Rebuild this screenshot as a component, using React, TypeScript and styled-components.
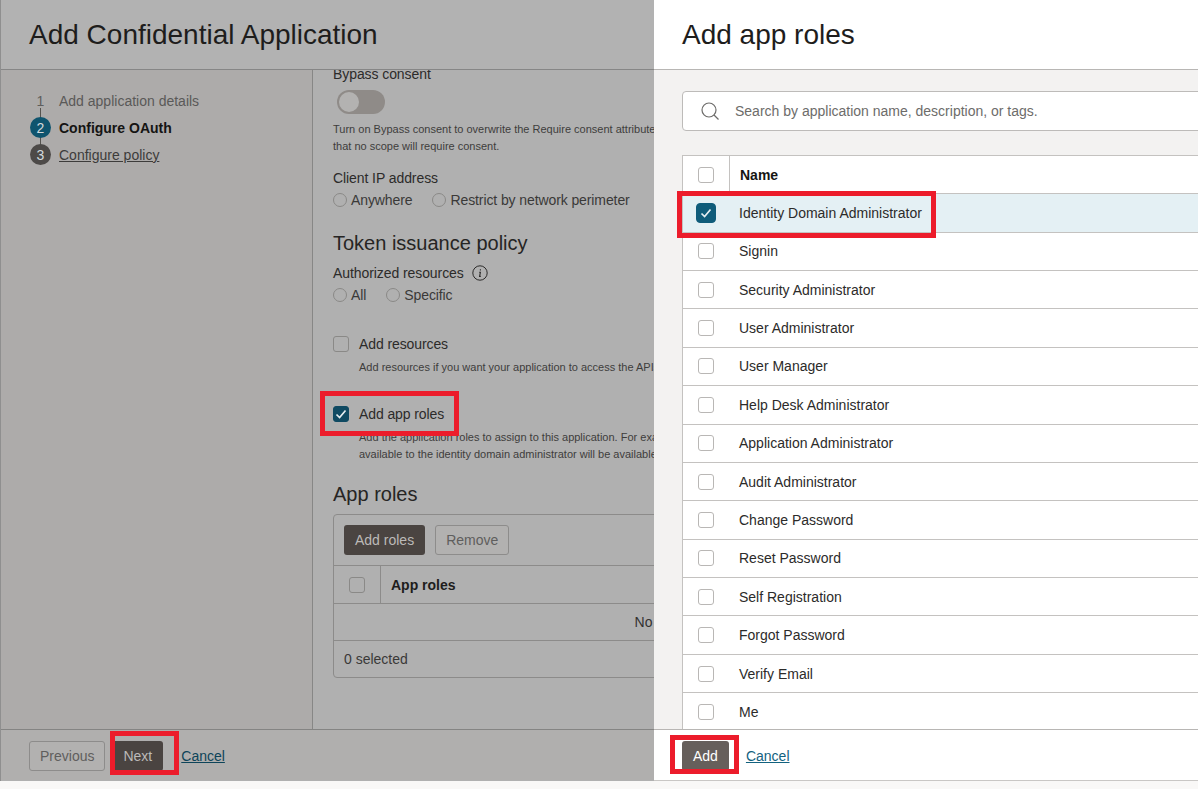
import React from 'react';
import styled, { createGlobalStyle } from 'styled-components';

const GlobalStyle = createGlobalStyle`
  html, body {
    margin: 0;
    padding: 0;
    height: 100%;
    overflow: hidden;
    background: #f9f8f7;
    font-family: "Liberation Sans", Arial, sans-serif;
  }
  * {
    box-sizing: border-box;
  }
`;

const Page = styled.div`
  display: flex;
  width: 1198px;
  height: 781px;
  overflow: hidden;
`;

const LeftPanel = styled.section`
  position: relative;
  display: flex;
  flex-direction: column;
  width: 654px;
  flex: none;
  background: #b1b1b1;
  border-left: 1px solid #8f8f8f;
  color: #1d1c1b;
`;

const RightPanel = styled.section`
  position: relative;
  display: flex;
  flex-direction: column;
  flex: 1;
  min-width: 0;
  background: #fff;
`;

const Header = styled.header<{ $dim?: boolean }>`
  flex: none;
  height: 70px;
  padding: 18px 0 0 28px;
  border-bottom: 1px solid ${(p) => (p.$dim ? '#868686' : '#b8b6b4')};
  background: ${(p) => (p.$dim ? '#b2b2b2' : '#fff')};
`;

const Title = styled.h1`
  margin: 0;
  font-size: 28px;
  line-height: 34px;
  font-weight: 400;
  color: #1e1d1c;
`;

const LeftBody = styled.div`
  flex: 1;
  min-height: 0;
  display: flex;
`;

const Sidebar = styled.nav`
  width: 312px;
  flex: none;
  padding: 17px 0 0 29px;
  background: #adabaa;
  border-right: 1px solid #878786;
`;

const Step = styled.div`
  position: relative;
  display: flex;
  align-items: center;
  gap: 8px;
  height: 27px;
  font-size: 14px;
`;

const StepBadge = styled.span<{ $kind: 'done' | 'current' | 'next' }>`
  position: relative;
  z-index: 1;
  display: flex;
  align-items: center;
  justify-content: center;
  width: 21px;
  height: 21px;
  flex: none;
  border-radius: 50%;
  font-size: 14px;
  color: ${(p) => (p.$kind === 'done' ? '#5f5e5d' : '#d3dadd')};
  background: ${(p) =>
    p.$kind === 'current' ? '#0f546e' : p.$kind === 'next' ? '#4d4a48' : 'transparent'};
`;

const StepLink = styled.span<{ $kind: 'done' | 'current' | 'next' }>`
  color: ${(p) => (p.$kind === 'current' ? '#151413' : p.$kind === 'next' ? '#3d3c3b' : '#5a5958')};
  font-weight: ${(p) => (p.$kind === 'current' ? 700 : 400)};
  text-decoration: ${(p) => (p.$kind === 'next' ? 'underline' : 'none')};
`;

const StepConnector = styled.span`
  position: absolute;
  left: 10px;
  top: -6px;
  width: 1px;
  height: 12px;
  background: #55534f;
`;

const Form = styled.div`
  flex: 1;
  min-width: 0;
  overflow: hidden;
  padding-left: 20px;
  background: #b0b0b0;
`;

const FieldLabel = styled.div<{ $top?: number }>`
  margin-top: ${(p) => p.$top ?? 0}px;
  font-size: 14px;
  line-height: 16px;
  letter-spacing: -0.08px;
  color: #2c2b2a;
  white-space: nowrap;
  display: flex;
  align-items: center;
  gap: 8px;
`;

const Toggle = styled.div`
  position: relative;
  width: 48px;
  height: 24px;
  margin: 8px 0 0 4px;
  border-radius: 12px;
  background: #8f8b88;
`;

const ToggleKnob = styled.span`
  position: absolute;
  left: 2px;
  top: 2px;
  width: 20px;
  height: 20px;
  border-radius: 50%;
  background: #b3b2b1;
`;

const HelpText = styled.p<{ $indent?: boolean; $top?: number }>`
  margin: ${(p) => p.$top ?? 0}px 0 0 ${(p) => (p.$indent ? 26 : 0)}px;
  font-size: 11px;
  line-height: 17px;
  color: #3e3d3c;
  white-space: nowrap;
`;

const RadioRow = styled.div`
  display: flex;
  gap: 20px;
  margin-top: 5px;
  font-size: 14px;
  line-height: 18px;
  letter-spacing: -0.1px;
  color: #3a3938;
`;

const RadioItem = styled.label`
  display: flex;
  align-items: center;
  gap: 4px;
`;

const Radio = styled.span`
  width: 14px;
  height: 14px;
  border: 1px solid #8a8987;
  border-radius: 50%;
`;

const SectionTitle = styled.h2<{ $top: number }>`
  margin: ${(p) => p.$top}px 0 0;
  font-size: 20px;
  line-height: 24px;
  font-weight: 400;
  color: #262524;
`;

const CheckField = styled.div<{ $top: number }>`
  display: flex;
  align-items: center;
  gap: 10px;
  margin-top: ${(p) => p.$top}px;
  font-size: 14px;
  line-height: 18px;
  letter-spacing: -0.1px;
  color: #2c2b2a;
`;

const Box = styled.span<{ $checked?: boolean; $dim?: boolean; $large?: boolean }>`
  display: flex;
  align-items: center;
  justify-content: center;
  width: ${(p) => (p.$large ? 20 : 16)}px;
  height: ${(p) => (p.$large ? 20 : 16)}px;
  flex: none;
  border-radius: ${(p) => (p.$large ? 4 : 3)}px;
  border: 1px solid ${(p) => (p.$checked ? (p.$dim ? '#0f4a62' : '#0f5c7a') : p.$dim ? '#8a8987' : '#b9b7b5')};
  background: ${(p) => (p.$checked ? (p.$dim ? '#0f4a62' : '#0f5c7a') : 'transparent')};
`;

const DimTable = styled.div`
  width: 718px;
  margin-top: 8px;
  border: 1px solid #8c8b8a;
  border-radius: 4px;
  font-size: 14px;
`;

const Toolbar = styled.div`
  display: flex;
  gap: 10px;
  height: 51px;
  padding: 10px 10px 0;
  border-bottom: 1px solid #8c8b8a;
`;

const SolidButton = styled.button<{ $light?: boolean }>`
  height: 30px;
  padding: 0 11px;
  border: none;
  border-radius: 3px;
  font-family: inherit;
  font-size: 14px;
  background: ${(p) => (p.$light ? '#665f5b' : '#4a4441')};
  color: ${(p) => (p.$light ? '#fff' : '#bcbab8')};
`;

const GhostButton = styled.button`
  height: 30px;
  padding: 0 10px;
  border: 1px solid #8d8c8b;
  border-radius: 3px;
  font-family: inherit;
  font-size: 14px;
  background: #b2b1b0;
  color: #5f5e5d;
`;

const DimHeadRow = styled.div`
  display: flex;
  align-items: center;
  height: 38px;
  border-bottom: 1px solid #8c8b8a;
`;

const CheckCell = styled.div<{ $divider?: boolean; $dim?: boolean }>`
  display: flex;
  align-items: center;
  justify-content: center;
  width: 47px;
  height: 100%;
  flex: none;
  border-right: 1px solid
    ${(p) => (p.$divider ? (p.$dim ? '#8c8b8a' : '#c4c2c0') : 'transparent')};
`;

const HeadLabel = styled.span<{ $dim?: boolean }>`
  padding-left: 10px;
  font-weight: 700;
  font-size: 14px;
  color: ${(p) => (p.$dim ? '#1e1d1c' : '#161513')};
`;

const EmptyRow = styled.div`
  height: 37px;
  line-height: 37px;
  text-align: center;
  border-bottom: 1px solid #8c8b8a;
  color: #333231;
`;

const TableFooter = styled.div`
  height: 36px;
  padding-left: 10px;
  line-height: 36px;
  color: #3a3938;
`;

const Footer = styled.footer<{ $dim?: boolean }>`
  flex: none;
  display: flex;
  align-items: center;
  height: 52px;
  padding: 1px 0 0 28px;
  gap: ${(p) => (p.$dim ? '7px' : '17px')};
  border-top: 1px solid ${(p) => (p.$dim ? '#848483' : '#b8b6b4')};
  border-bottom: 1px solid ${(p) => (p.$dim ? '#b0b0b0' : '#c9c7c5')};
  background: ${(p) => (p.$dim ? '#b0afae' : '#fff')};
`;

const CancelLink = styled.a<{ $dim?: boolean }>`
  font-size: 14px;
  text-decoration: underline;
  margin-left: ${(p) => (p.$dim ? '11px' : '0')};
  color: ${(p) => (p.$dim ? '#0d4459' : '#13627f')};
`;

const RightBody = styled.div`
  flex: 1;
  min-height: 0;
  overflow: hidden;
  padding: 21px 0 0 28px;
  background: #f3f2f1;
`;

const SearchBar = styled.div`
  display: flex;
  align-items: center;
  gap: 15px;
  width: 560px;
  height: 40px;
  padding-left: 17px;
  background: #fff;
  border: 1px solid #bdbbb9;
  border-radius: 4px;
  font-size: 14px;
  color: #6d6c6a;
`;

const RolesTable = styled.div`
  width: 560px;
  margin-top: 24px;
  background: #fff;
  border: 1px solid #c4c2c0;
  border-bottom: none;
`;

const HeadRow = styled.div`
  display: flex;
  align-items: center;
  height: 38.2px;
  border-bottom: 1px solid #c4c2c0;
`;

const RoleRow = styled.div<{ $selected?: boolean }>`
  display: flex;
  align-items: center;
  height: 38.4px;
  border-bottom: 1px solid #c4c2c0;
  background: ${(p) => (p.$selected ? '#e4f0f4' : '#fff')};
  font-size: 14px;
  color: #2c2b2a;
`;

const RoleName = styled.span`
  padding-left: 9px;
`;

const Highlight = styled.div<{ $l: number; $t: number; $w: number; $h: number }>`
  position: absolute;
  left: ${(p) => p.$l}px;
  top: ${(p) => p.$t}px;
  width: ${(p) => p.$w}px;
  height: ${(p) => p.$h}px;
  border: 5px solid #ec1c2b;
  pointer-events: none;
`;

const Tick = () => (
  <svg width="12" height="12" viewBox="0 0 12 12" fill="none">
    <path d="M1.5 6.5 L4.6 9.5 L10.5 2.5" stroke="#e6eef1" strokeWidth="1.7" />
  </svg>
);

const InfoIcon = () => (
  <svg width="16" height="16" viewBox="0 0 16 16" fill="none">
    <circle cx="8" cy="8" r="7.2" stroke="#2c2b2a" strokeWidth="1" />
    <path d="M8.4 4.2v1.2M7.2 7.2h1.2L7.6 11.4h1.2" stroke="#2c2b2a" strokeWidth="1.1" />
  </svg>
);

const SearchIcon = () => (
  <svg width="20" height="20" viewBox="0 0 20 20" fill="none">
    <circle cx="9" cy="9" r="7" stroke="#6d6c6a" strokeWidth="1.2" />
    <path d="M14 14l4.5 4.5" stroke="#6d6c6a" strokeWidth="1.2" />
  </svg>
);

const roles = [
  'Identity Domain Administrator',
  'Signin',
  'Security Administrator',
  'User Administrator',
  'User Manager',
  'Help Desk Administrator',
  'Application Administrator',
  'Audit Administrator',
  'Change Password',
  'Reset Password',
  'Self Registration',
  'Forgot Password',
  'Verify Email',
  'Me'
];

const App = () => {
  return (
    <>
      <GlobalStyle />
      <Page>
        <LeftPanel>
          <Header $dim>
            <Title>Add Confidential Application</Title>
          </Header>
          <LeftBody>
            <Sidebar>
              <Step>
                <StepBadge $kind="done">1</StepBadge>
                <StepLink $kind="done">Add application details</StepLink>
              </Step>
              <Step>
                <StepConnector />
                <StepBadge $kind="current">2</StepBadge>
                <StepLink $kind="current">Configure OAuth</StepLink>
              </Step>
              <Step>
                <StepConnector />
                <StepBadge $kind="next">3</StepBadge>
                <StepLink $kind="next">Configure policy</StepLink>
              </Step>
            </Sidebar>
            <Form>
              <FieldLabel $top={-4}>Bypass consent</FieldLabel>
              <Toggle>
                <ToggleKnob />
              </Toggle>
              <HelpText $top={7}>
                Turn on Bypass consent to overwrite the Require consent attribute for all scopes so
                <br />
                that no scope will require consent.
              </HelpText>
              <FieldLabel $top={15}>Client IP address</FieldLabel>
              <RadioRow>
                <RadioItem>
                  <Radio />
                  Anywhere
                </RadioItem>
                <RadioItem>
                  <Radio />
                  Restrict by network perimeter
                </RadioItem>
              </RadioRow>
              <SectionTitle $top={22}>Token issuance policy</SectionTitle>
              <FieldLabel $top={10}>
                Authorized resources <InfoIcon />
              </FieldLabel>
              <RadioRow>
                <RadioItem>
                  <Radio />
                  All
                </RadioItem>
                <RadioItem>
                  <Radio />
                  Specific
                </RadioItem>
              </RadioRow>
              <CheckField $top={31}>
                <Box $dim />
                Add resources
              </CheckField>
              <HelpText $indent $top={6}>
                Add resources if you want your application to access the APIs of other applications.
              </HelpText>
              <CheckField $top={29}>
                <Box $dim $checked>
                  <Tick />
                </Box>
                Add app roles
              </CheckField>
              <HelpText $indent $top={6}>
                Add the application roles to assign to this application. For example, the APIs
                <br />
                available to the identity domain administrator will be available to this application.
              </HelpText>
              <SectionTitle $top={19}>App roles</SectionTitle>
              <DimTable>
                <Toolbar>
                  <SolidButton>Add roles</SolidButton>
                  <GhostButton>Remove</GhostButton>
                </Toolbar>
                <DimHeadRow>
                  <CheckCell $divider $dim>
                    <Box $dim />
                  </CheckCell>
                  <HeadLabel $dim>App roles</HeadLabel>
                </DimHeadRow>
                <EmptyRow>No data to display.</EmptyRow>
                <TableFooter>0 selected</TableFooter>
              </DimTable>
            </Form>
          </LeftBody>
          <Footer $dim>
            <GhostButton>Previous</GhostButton>
            <SolidButton>Next</SolidButton>
            <CancelLink $dim>Cancel</CancelLink>
          </Footer>
          <Highlight $l={319} $t={391} $w={139} $h={45} />
          <Highlight $l={109} $t={731} $w={69} $h={44} />
        </LeftPanel>
        <RightPanel>
          <Header>
            <Title>Add app roles</Title>
          </Header>
          <RightBody>
            <SearchBar>
              <SearchIcon />
              Search by application name, description, or tags.
            </SearchBar>
            <RolesTable>
              <HeadRow>
                <CheckCell $divider>
                  <Box />
                </CheckCell>
                <HeadLabel>Name</HeadLabel>
              </HeadRow>
              {roles.map((role, index) => (
                <RoleRow key={role} $selected={index === 0}>
                  <CheckCell>
                    <Box $checked={index === 0} $large={index === 0}>
                      {index === 0 && <Tick />}
                    </Box>
                  </CheckCell>
                  <RoleName>{role}</RoleName>
                </RoleRow>
              ))}
            </RolesTable>
          </RightBody>
          <Footer>
            <SolidButton $light>Add</SolidButton>
            <CancelLink>Cancel</CancelLink>
          </Footer>
          <Highlight $l={23} $t={191} $w={259} $h={47} />
          <Highlight $l={16} $t={735} $w={69} $h={39} />
        </RightPanel>
      </Page>
    </>
  );
};

export default App;
